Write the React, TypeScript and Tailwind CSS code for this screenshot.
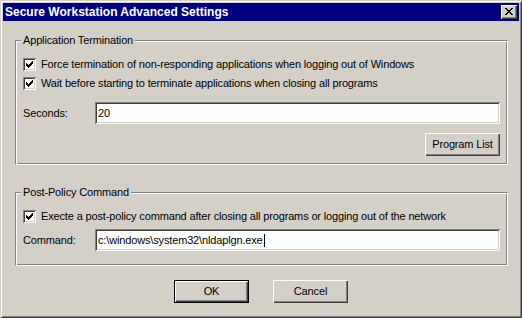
import React from 'react';

const raised =
  'shadow-[inset_1px_1px_#fff,inset_-1px_-1px_#404040,inset_-2px_-2px_#808080]';
const sunken =
  'shadow-[inset_1px_1px_#808080,inset_-1px_-1px_#fff,inset_2px_2px_#404040,inset_-2px_-2px_#d4d0c8]';

function CheckBox({ label }: { label: string }): React.ReactElement {
  return (
    <div className="flex h-[13px] items-center">
      <div className={`relative h-[13px] w-[13px] shrink-0 bg-white ${sunken}`}>
        <svg
          className="absolute left-[3px] top-[3px]"
          width="7"
          height="7"
          viewBox="0 0 7 7"
          shapeRendering="crispEdges"
        >
          <path
            d="M0 2h1v3h-1zM1 3h1v3h-1zM2 4h1v3h-1zM3 3h1v3h-1zM4 2h1v3h-1zM5 1h1v3h-1zM6 0h1v3h-1z"
            fill="#000"
          />
        </svg>
      </div>
      <span className="ml-[5px] whitespace-nowrap leading-[13px]">{label}</span>
    </div>
  );
}

function Field({ label, value, caret }: { label: string; value: string; caret?: boolean }): React.ReactElement {
  return (
    <div className="flex h-[22px] items-center">
      <span className="w-[72px] shrink-0 leading-[13px]">{label}</span>
      <div className={`flex h-[22px] w-[405px] items-center bg-white pl-[3px] ${sunken}`}>
        <span className="whitespace-nowrap leading-[13px]">{value}</span>
        {caret && <span className="ml-[1px] h-[13px] w-[1px] bg-black" />}
      </div>
    </div>
  );
}

function GroupBox({
  title,
  className,
  children,
}: {
  title: string;
  className: string;
  children: React.ReactNode;
}): React.ReactElement {
  return (
    <div
      className={`relative ml-[12px] w-[493px] border border-b-white border-l-[#808080] border-r-white border-t-[#808080] px-[7px] pt-[17px] shadow-[inset_1px_1px_#fff,inset_-1px_-1px_#808080] ${className}`}
    >
      <span className="absolute left-[5px] top-[-7px] bg-[#d4d0c8] px-[2px] leading-[13px]">{title}</span>
      {children}
    </div>
  );
}

function Button({ label, isDefault }: { label: string; isDefault?: boolean }): React.ReactElement {
  if (isDefault) {
    return (
      <div className="h-[23px] w-[75px] border border-black">
        <div className={`flex h-full w-full items-center justify-center ${raised}`}>{label}</div>
      </div>
    );
  }
  return (
    <div className={`flex h-[23px] w-[75px] items-center justify-center ${raised}`}>{label}</div>
  );
}

export default function App(): React.ReactElement {
  return (
    <div
      className="flex h-[318px] w-[522px] flex-col bg-[#d4d0c8] p-[3px] text-[11px] tracking-[-0.15px] text-black shadow-[inset_1px_1px_#d4d0c8,inset_-1px_-1px_#404040,inset_2px_2px_#fff,inset_-2px_-2px_#808080]"
      style={{ fontFamily: '"Liberation Sans", Arial, sans-serif' }}
    >
      <div className="flex h-[18px] items-center justify-between bg-[#000080] pl-[2px] pr-[2px]">
        <span className="text-[12px] font-bold leading-[14px] tracking-normal text-white">
          Secure Workstation Advanced Settings
        </span>
        <div className={`relative h-[14px] w-[16px] bg-[#d4d0c8] ${raised}`}>
          <svg
            className="absolute left-[4px] top-[3px]"
            width="8"
            height="7"
            viewBox="0 0 8 7"
            shapeRendering="crispEdges"
          >
            <path
              d="M0 0h2v1h-2zM6 0h2v1h-2zM1 1h2v1h-2zM5 1h2v1h-2zM2 2h4v1h-4zM3 3h2v1h-2zM2 4h4v1h-4zM1 5h2v1h-2zM5 5h2v1h-2zM0 6h2v1h-2zM6 6h2v1h-2z"
              fill="#000"
            />
          </svg>
        </div>
      </div>

      <GroupBox title="Application Termination" className="mt-[19px] pb-[8px]">
        <CheckBox label="Force termination of non-responding applications when logging out of Windows" />
        <div className="mt-[6px]">
          <CheckBox label="Wait before starting to terminate applications when closing all programs" />
        </div>
        <div className="mt-[12px]">
          <Field label="Seconds:" value="20" />
        </div>
        <div className="mt-[9px] flex justify-end">
          <Button label="Program List" />
        </div>
      </GroupBox>

      <GroupBox title="Post-Policy Command" className="mt-[27px] pb-[14px]">
        <CheckBox label="Execte a post-policy command after closing all programs or logging out of the network" />
        <div className="mt-[6px]">
          <Field label="Command:" value="c:\windows\system32\nldaplgn.exe" caret />
        </div>
      </GroupBox>

      <div className="mt-[14px] flex justify-center gap-[24px]">
        <Button label="OK" isDefault />
        <Button label="Cancel" />
      </div>
    </div>
  );
}
